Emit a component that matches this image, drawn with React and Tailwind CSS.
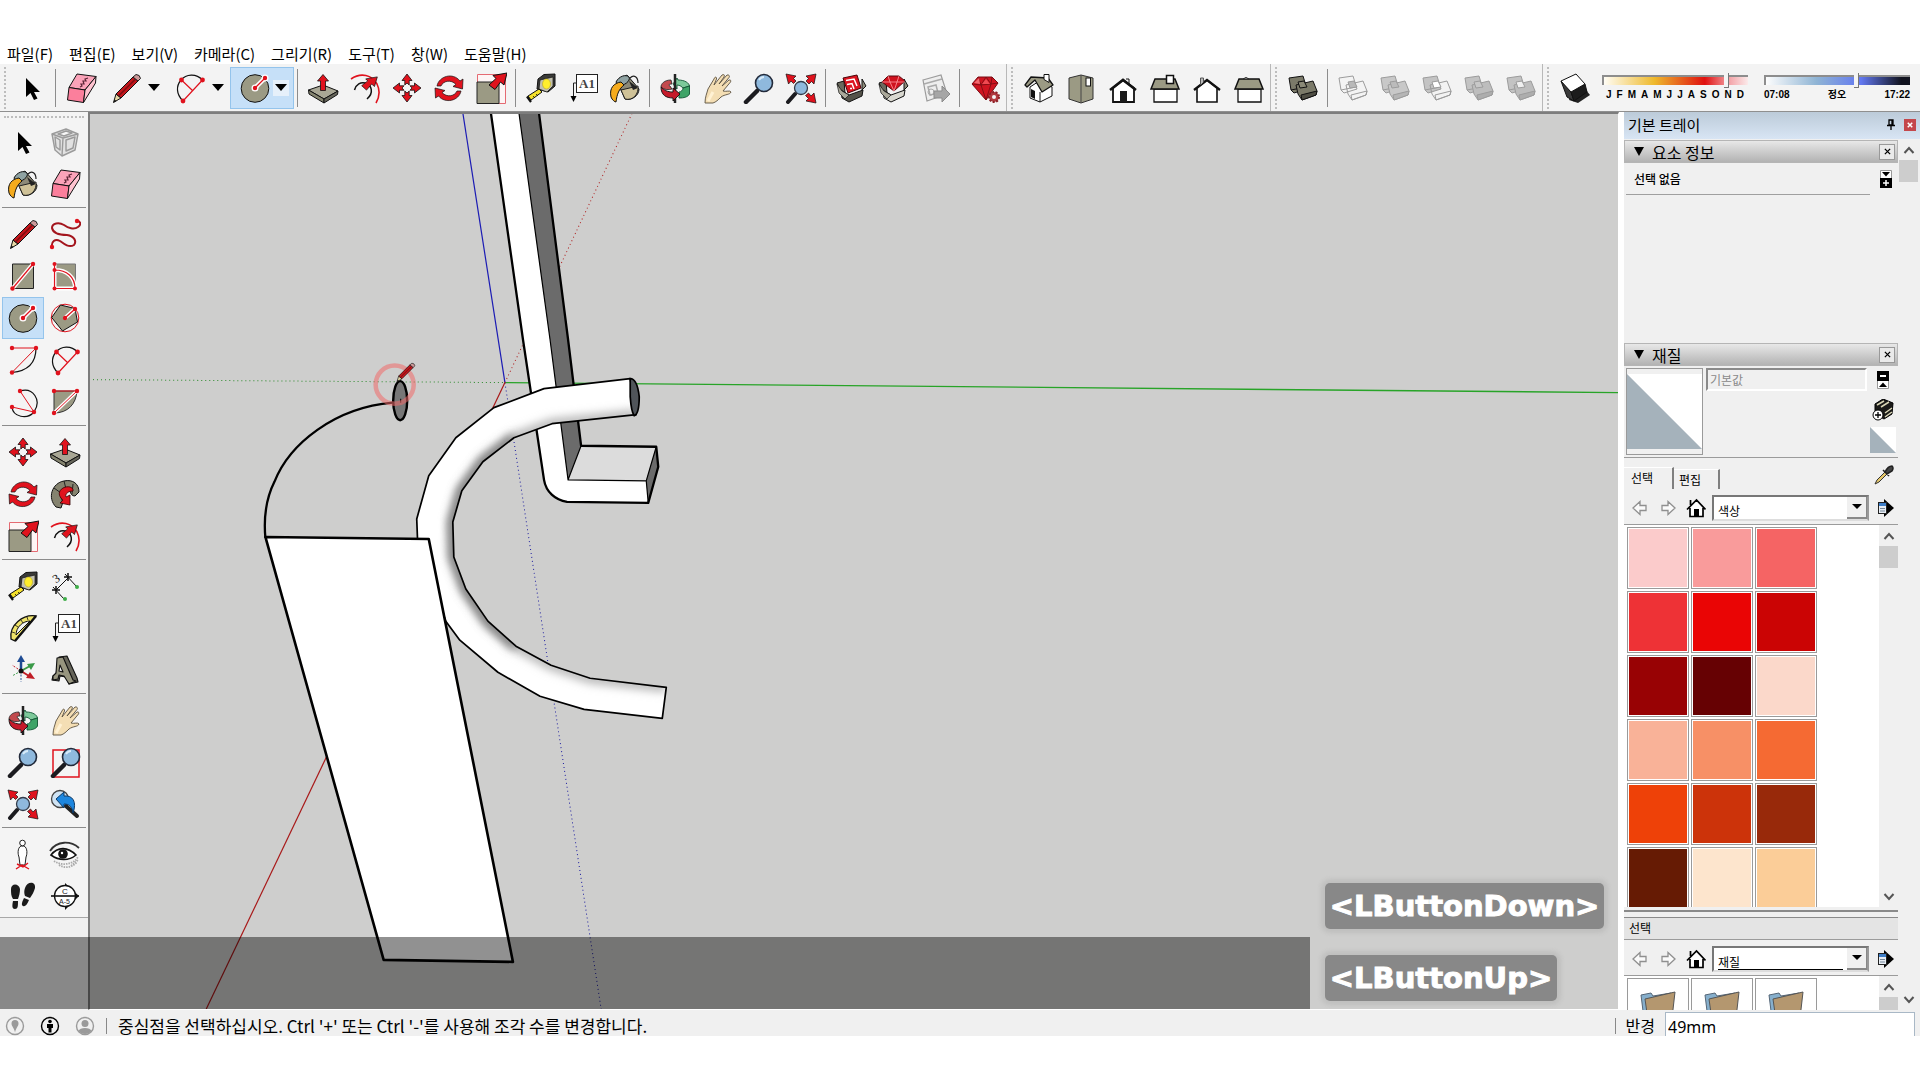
import React from "react";

const RED = "#e0121d";
const OLIVE = "#9b9a84";

function Ico({ children, size = "size-8" }) {
  return (
    <svg viewBox="0 0 32 32" className={size + " shrink-0"} fill="none" aria-hidden="true">
      {children}
    </svg>
  );
}
const Dots = ({ pts, r = 2.2 }) => pts.map(([x, y]) => <circle key={x + "-" + y} cx={x} cy={y} r={r} fill={RED} />);

const CursorIcon = () => (
  <Ico><path d="M11 6V25L15.500 21L19 28L22.500 26.500L19 20H25Z" fill="#000" /></Ico>
);
const EraserIcon = () => (
  <Ico>
    <g stroke="#111" strokeWidth="1" strokeLinejoin="round">
      <path d="M12 2L31 4.500L20 18L4 15.500Z" fill="#fba3b9" />
      <path d="M4 15.500L20 18L18.500 30.500L2.500 28Z" fill="#fb7f9c" />
      <path d="M31 4.500L30.500 11L18.500 30.500L20 18Z" fill="#ffc3d0" />
    </g>
    <path d="M15 15l2-1-1-2 3 0-1-3 3 0-1-2 3-1" stroke="#5b2435" strokeWidth="1.200" />
  </Ico>
);
const PencilShape = () => (
  <>
    <path d="M3.500 30.500L6 22L11 26Z" fill="#e7d9a6" stroke="#111" strokeLinejoin="round" />
    <path d="M3.500 30.500L4.500 27.500L6.500 29Z" fill="#111" />
    <path d="M6 22L23 5L28 9L11 26Z" fill="#c4161c" stroke="#111" />
    <path d="M9 23.500L25 7.500" stroke="#7b0e12" strokeWidth="1.500" />
    <path d="M23 5L26 2.500Q30 2.500 30.500 6.500L28 9Z" fill="#c99" stroke="#222" />
  </>
);
const PencilIcon = () => <Ico><PencilShape /></Ico>;
const ArcIcon = () => (
  <Ico>
    <path d="M9 29C2 22 2 14 7 8C12 2 22 1 28.500 8" stroke="#111" strokeWidth="1.200" />
    <path d="M9 29L28.500 8M7.500 8L19 19" stroke={RED} strokeWidth="1.200" />
    <Dots pts={[[9, 29], [28.5, 8], [7.5, 8]]} r={2.4} />
  </Ico>
);
const CircleIcon = () => (
  <Ico>
    <circle cx="16" cy="16.500" r="13.800" fill={OLIVE} stroke="#111" />
    <path d="M16 16L26 6" stroke="#fff" strokeWidth="4.500" strokeLinecap="round" />
    <circle cx="16" cy="16" r="3.500" fill="#fff" /><circle cx="26" cy="6" r="3.500" fill="#fff" />
    <path d="M16 16L26 6" stroke={RED} strokeWidth="1.200" />
    <Dots pts={[[16, 16], [26, 6]]} />
  </Ico>
);
const PushPullIcon = () => (
  <Ico>
    <path d="M1.500 18L16 13L31 19L17 27Z" fill="#a9a795" stroke="#111" strokeLinejoin="round" />
    <path d="M1.500 18L17 27V31L2 22Z" fill="#85846f" stroke="#111" strokeLinejoin="round" />
    <path d="M17 27L31 19L30.500 22.500L17 31Z" fill="#66655a" stroke="#111" strokeLinejoin="round" />
    <path d="M16 2.500L21.500 9H18.500V18.500H13.500V9H10.500Z" fill={RED} stroke="#111" strokeWidth=".800" />
  </Ico>
);
const NEArrow = () => (
  <path d="M31 3L27.500 15L24 12L17.500 19.500L11.500 14L19 8L16.500 5.500Z" fill={RED} stroke="#111" strokeWidth=".900" strokeLinejoin="round" />
);
const OffsetIcon = () => (
  <Ico>
    <path d="M2 7C12 0 23 3 28 12C31 18 31 24 27 31" stroke={RED} strokeWidth="1.600" />
    <path d="M5.500 18C7 12 12 10 16 11C23 13 25 21 18 27" stroke="#111" strokeWidth="1.500" />
    <g transform="translate(3.500 2.500) scale(.8)"><NEArrow /></g>
  </Ico>
);
const MoveIcon = () => (
  <Ico>
    <g fill={RED} stroke="#111" strokeWidth=".800" strokeLinejoin="round">
      {["rotate(0 16 16)", "rotate(90 16 16)", "rotate(180 16 16)", "rotate(270 16 16)"].map((t) => (
        <path key={t} transform={t} d="M16 2L21 8.500H18.200V13L16 11L13.800 13V8.500H11Z" />
      ))}
    </g>
  </Ico>
);
const RotateIcon = () => (
  <Ico>
    <g fill={RED} stroke="#111" strokeWidth=".700" strokeLinejoin="round">
      <path d="M4 14C6 4 20 0 27 9L30 7L29.500 17L20 14.500L23 12.500C18 7 10 9 8 14Z" />
      <path d="M28 19C26 29 12 32 5.500 24L2.500 26L2 16L12 18.500L9 20.500C14 26 22 24 24 19Z" />
    </g>
  </Ico>
);
const ScaleIcon = () => (
  <Ico>
    <path d="M2.500 2.500H30.500V31.500H2.500Z" stroke="#e56a72" fill="#fdf5f5" />
    <path d="M2 10H24V31.500H2Z" fill={OLIVE} stroke="#222" />
    <path d="M32 1L29 13L25.500 10L20 17.500L14 13L21 6.500L18 3.500Z" fill={RED} stroke="#111" strokeLinejoin="round" />
  </Ico>
);
const TapeIcon = () => (
  <Ico>
    <path d="M13 7L19 2.500L30 2L30 14L23 20L12 17Z" fill="#3a3a38" stroke="#111" />
    <path d="M15 8L28 5L28 14L22 20L14 17Z" fill="#c3c1b0" stroke="#111" strokeWidth=".700" />
    <ellipse cx="21.500" cy="12" rx="4" ry="5" fill="#ffee2c" stroke="#b8a820" strokeWidth=".600" />
    <path d="M14 17L17 20L6 28L3 24Z" fill="#f5e12a" stroke="#111" />
    <path d="M2 24.500L6 30" stroke="#111" strokeWidth="2.200" /><path d="M8 24l2 2M11 22l2 2" stroke="#111" strokeWidth=".800" />
  </Ico>
);
const TextIcon = () => (
  <Ico>
    <rect x="9.500" y="2.500" width="21" height="18" fill="#fff" stroke="#222" />
    <text x="12" y="16" fontSize="13" fontFamily="Liberation Serif" fontWeight="700" fill="#444">A1</text>
    <path d="M9 11H6.500V25" stroke="#222" /><path d="M3.500 24H9.500L6.500 30Z" fill="#000" />
  </Ico>
);
const PaintIcon = () => (
  <Ico>
    <path d="M8 9L18 3L30 17C30 24 22 29 16 27Z" fill="#8d8a78" stroke="#111" strokeLinejoin="round" />
    <path d="M12 18L29 14C30 22 24 29 16 27Z" fill="#cfc298" stroke="#222" />
    <path d="M7 10C10 4 17 2 20 5C22 9 15 14 9 14Z" fill="#8fa3a3" stroke="#111" />
    <path d="M21 6C25 2 29 5 29 11" stroke="#222" strokeWidth="1.200" />
    <path d="M20 9l4 9 5-2z" fill="#222" />
    <path d="M12 10C5 11 0 16 2 25C3 28 6 30 7 30C8 22 10 17 15 13Z" fill="#f5ab1d" stroke="#111" />
  </Ico>
);
const OrbitIcon = () => (
  <Ico>
    <path d="M12 8C5 8 2 12 2 15C5 18 10 18 13 17L11 14C9 13 10 12 13 12Z" fill="#c24a4e" stroke="#222" strokeWidth=".800" />
    <path d="M19 8C26 8 30 11 30.500 14L24 16C23 15 21 13 18 13V17L14 12L18 6Z" fill="#7cc99a" stroke="#153" strokeWidth=".900" />
    <path d="M30.500 14V22C29 25 25 26 20 26V20C22 20 24 18 24 16Z" fill="#3fa468" stroke="#153" strokeWidth=".900" />
    <path d="M16 2V31" stroke="#222" strokeWidth="2.500" />
    <path d="M2 15C2 23 7 26 14 26V29L21 22L14 16V20C8 20 5 18 2 15Z" fill="#c51a2a" stroke="#111" strokeWidth=".900" />
  </Ico>
);
const HandIcon = () => (
  <Ico>
    <path d="M4 31C4 25 6 21 7 17L13 7C14 4 16 5 15.500 7L13 13L21 3C23 2 24 3 23 5L18 12L26 3C28 2.500 29 4 28 5.500L21 14L28 8C30 7.500 30 9 29.500 10L22 19C25 20 29 18 30 20C29 23 24 22 20 25C17 28 15 30 12 31Z" fill="#f4deb4" stroke="#5a5040" strokeWidth=".900" strokeLinejoin="round" />
    <path d="M7 29l5-9" stroke="#fff1d3" strokeWidth="3" />
  </Ico>
);
const Lens = () => (
  <>
    <path d="M3 30L14 19" stroke="#1b1b1f" strokeWidth="4.500" strokeLinecap="round" />
    <circle cx="21" cy="11" r="8.500" fill="#8fb9dd" stroke="#222a3a" strokeWidth="1.600" />
    <path d="M16 8a6 6 0 0 1 5-3" stroke="#d8ebf9" strokeWidth="1.800" />
  </>
);
const ZoomIcon = () => <Ico><Lens /></Ico>;
const ExtentsIcon = () => (
  <Ico>
    <path d="M3 30L10 22" stroke="#1b1b1f" strokeWidth="4" strokeLinecap="round" />
    <circle cx="16" cy="16" r="6.500" fill="#8fb9dd" stroke="#333c4a" strokeWidth="1.300" />
    <g fill={RED} stroke="#111" strokeWidth=".700">
      <path d="M1 2L11 4L8.500 6.500L11 9L8.500 11.500L6 9L3.500 12Z" />
      <path d="M31 2L29 12L26.500 9.500L24 12L21 9L23.500 6.500L21 4Z" />
      <path d="M31 31L21 29L23.500 26.500L20.500 23.500L23.500 21L26 24L29 21Z" />
    </g>
  </Ico>
);
const Box = ({ lid }) => (
  <>
    <path d="M2 11L9 9L10 21L6 20Z" fill="#6b6a5e" stroke="#111" />
    <path d="M6 18L14 23L28 18L27 24L14 30L7 26Z" fill={lid} stroke="#111" />
    <path d="M27 7L31 14L27 18Z" fill="#8e8c7c" stroke="#111" />
    <path d="M2 12L7 19L14 23L10 27L4 21Z" fill="#aaa89a" stroke="#111" strokeWidth=".700" />
  </>
);
const WarehouseIcon = () => (
  <Ico>
    <Box lid="#55534a" />
    <path d="M8 6L22 3L26 16L13 21Z" fill="#dc1420" stroke="#4a0508" />
    <path d="M11 8.500L19 7L22 14M12 12.500L17 11.500L19 17M15 16.500l2 0" stroke="#fff" strokeWidth="1.500" />
  </Ico>
);
const ExtBoxIcon = () => (
  <Ico>
    <Box lid="#d9d8d0" />
    <path d="M5 10L11 4H22L28 9L17 19Z" fill="#d0121e" stroke="#5a0a10" />
    <path d="M5 10H28M11 4L13 10L17 19L20 10L22 4" stroke="#ff9aa0" strokeWidth=".800" />
  </Ico>
);
const SendIcon = () => (
  <Ico>
    <path d="M4 8L22 3L28 22L8 29Z" fill="#eee" stroke="#9b9b9b" strokeWidth="1.200" />
    <path d="M5 12L23 7M9 15l8-2 2 8-8 2z" stroke="#aaa" strokeWidth="1.500" />
    <circle cx="12" cy="20" r="3" stroke="#aaa" />
    <path d="M15 19H23V14L31 22L23 30V26H15Z" fill="#a6a6a6" stroke="#8b8b8b" />
  </Ico>
);
const GemIcon = () => (
  <Ico>
    <path d="M3 12L9 5H23L29 11L17 28Z" fill="#cf1420" stroke="#7a0a12" />
    <path d="M3 12L12 13L17 28M12 13L9 5M12 13L22 12L29 11M22 12L23 5M22 12L17 28M12 13l5-8 5 7" stroke="#7d0d14" strokeWidth=".900" />
    <path d="M5 11l5-5 1 6z" fill="#f26a70" /><path d="M13 12l4-5 4 5z" fill="#ef4a52" />
    <circle cx="25" cy="25" r="5" fill="#b2393f" stroke="#8c2026" strokeDasharray="2 1.500" strokeWidth="2" />
    <circle cx="25" cy="25" r="2" fill="#f3f3f3" />
  </Ico>
);

const IsoIcon = () => (
  <Ico>
    <path d="M7 15L18 8L29 15L29 24L17 30L7 26Z" fill="#fff" stroke="#111" />
    <path d="M2 13L8 5L25 6L30 13L19 20L12 8L4 15Z" fill={OLIVE} stroke="#111" strokeWidth="1.300" strokeLinejoin="round" />
    <path d="M21 2.500h5v8l-5-3z" fill="#fff" stroke="#111" />
    <path d="M17 30V20" stroke="#111" /><path d="M8 17l4 2v8l-4-2z" fill="#111" />
  </Ico>
);
const TopIcon = () => (
  <Ico>
    <path d="M4 6L16 3L28 6V27L16 31L4 27Z" fill={OLIVE} stroke="#333" />
    <path d="M16 3V31" stroke="#444" /><rect x="21" y="6" width="4.500" height="8" fill="#fff" stroke="#111" />
  </Ico>
);
const FrontIcon = () => (
  <Ico>
    <path d="M6 16V30H27V16L16 8Z" fill="#fff" stroke="#111" strokeWidth="1.800" />
    <path d="M3 18L16 8L29 18" stroke="#111" strokeWidth="2.600" /><path d="M19 7h3v5" stroke="#111" /><path d="M13 19h7v11h-7z" fill="#1b1b1b" />
  </Ico>
);
const SideIcon = ({ big }) => (
  <Ico>
    <path d="M5 17H28V30H5Z" fill="#fff" stroke="#111" strokeWidth="1.300" />
    <path d="M6 7H26L30 17H2Z" fill={OLIVE} stroke="#111" strokeWidth="1.500" />
    {big ? <path d="M17.500 3.500h7v8h-7z" fill="#fff" stroke="#111" strokeWidth="1.500" /> : <path d="M10 7q3-3 6 0" fill="#888" stroke="#222" />}
  </Ico>
);
const BackIcon = () => (
  <Ico>
    <path d="M6 16V30H26V16L16 8Z" fill="#fff" stroke="#111" strokeWidth="1.600" />
    <path d="M3 18L16 8L29 18" stroke="#111" strokeWidth="2.300" /><path d="M9.500 13V6h3v4" stroke="#555" fill="#bbb" />
  </Ico>
);
const SolidIcon = ({ a, b, c, line, mid }) => (
  <Ico>
    <g stroke={line} strokeLinejoin="round">
      <path d="M2 6L16 4L20 17L7 21L4 18Z" fill={a} />
      <path d="M4 18L19 15" />
      <path d="M9 13L26 9L30 19L29 23L15 28L11 22Z" fill={b} />
      <path d="M11 10L17 9L20 15L13 16Z" fill={mid} />
      <path d="M14 23L30 19L29 23L15 28Z" fill={c} />
    </g>
  </Ico>
);
const ShadowIcon = () => (
  <Ico>
    <path d="M12 22L27 18L31 23L19 31L10 28Z" fill="#222" />
    <path d="M2 9L8 25L15 29L12 20Z" fill="#3a3a3a" stroke="#111" />
    <path d="M12 20L26 12L28 20L15 29Z" fill="#1c1c1c" stroke="#111" />
    <path d="M2 9L17 2L26 12L12 20Z" fill="#fff" stroke="#111" strokeLinejoin="round" />
  </Ico>
);

const ComponentIcon = () => (
  <Ico>
    <g stroke="#9b9b9b" strokeWidth="1.400" strokeLinejoin="round">
      <path d="M3 8L17 3L29 8L26 24L13 30L6 24Z" fill="#e2e2e2" />
      <path d="M3 8L14 12L29 8M14 12L13 30M6 11l5 3 0 10-4-3zM17 14l9-3-2 11-7 3z" />
      <path d="M9 8l8-3 6 2-8 3z" fill="#f7f7f7" />
    </g>
  </Ico>
);
const FreehandIcon = () => (
  <Ico>
    <path d="M3 29C2 24 6 20 11 23C15 26 20 30 25 27C28 23 25 18 18 17C10 17 4 15 3 10C3 5 10 4 15 7C19 10 25 12 29 9C33 6 31 3 28 3" stroke="#a3151d" strokeWidth="2" />
    <Dots pts={[[3, 29], [28, 3]]} />
  </Ico>
);
const RectIcon = () => (
  <Ico>
    <path d="M5.500 4H26.500V28.500H5.500Z" fill={OLIVE} stroke="#222" />
    <path d="M5.500 28.500L26 4" stroke="#fff" strokeWidth="4" /><path d="M5.500 28.500L26 4" stroke={RED} strokeWidth="1.200" />
    <Dots pts={[[5.5, 28.5], [26, 4]]} />
  </Ico>
);
const RotRectIcon = () => (
  <Ico>
    <path d="M5.500 4H26.500V28.500H5.500Z" fill={OLIVE} stroke="#777" />
    <path d="M5.500 4V28.500H26C26 17 18 10 5.500 10" stroke="#fff" strokeWidth="4" />
    <path d="M5.500 4V28.500H26C26 17 18 10 5.500 10" stroke={RED} strokeWidth="1.200" />
    <Dots pts={[[5.5, 4], [5.5, 10], [5.5, 28.5], [26, 28.5]]} r={2} />
  </Ico>
);
const PolygonIcon = () => (
  <Ico>
    <circle cx="16" cy="16" r="13.800" stroke={RED} />
    <path d="M11.500 3L26 6.500L28.500 20L13.500 29L2.700 15.500Z" fill={OLIVE} stroke="#111" />
    <path d="M16 16L26 7" stroke="#fff" strokeWidth="4" strokeLinecap="round" /><path d="M16 16L26 7" stroke={RED} strokeWidth="1.200" />
    <Dots pts={[[16, 16], [26, 7]]} />
  </Ico>
);
const ArcCenterIcon = () => (
  <Ico>
    <path d="M29 4C29 18 21 27 5 28.500" stroke="#111" strokeWidth="1.200" />
    <path d="M5 4H29L5 28.500" stroke={RED} /><Dots pts={[[5, 4], [29, 4], [5, 28.5]]} />
  </Ico>
);
const Arc3Icon = () => (
  <Ico>
    <path d="M13 5C26 1 35 14 27 26C20 34 6 31 5 21" stroke="#111" strokeWidth="1.200" />
    <path d="M13 5L27 26L5 21" stroke={RED} /><Dots pts={[[13, 5], [27, 26], [5, 21]]} />
  </Ico>
);
const PieIcon = () => (
  <Ico>
    <path d="M5 5H28C27 18 19 27 5 27Z" fill={OLIVE} stroke="#333" />
    <path d="M5 27L28 5" stroke="#fff" strokeWidth="3.500" /><path d="M5 5H28L5 27" stroke={RED} />
    <Dots pts={[[5, 5], [28, 5], [5, 27]]} />
  </Ico>
);
const FollowIcon = () => (
  <Ico>
    <path d="M7 29C-2 20 3 5 15 3C24 1 30 6 30 14L26 18C20 18 22 10 18 11C12 12 10 18 14 24L12 30Z" fill="#85836f" stroke="#111" />
    <path d="M15 3L17 11M5 10l7 5M24 6l-1 10" stroke="#222" />
    <path d="M14 10C20 7 25 10 24 13C18 13 16 17 17 19L21 17V27L11 25L14 22C9 18 9 13 14 10Z" fill={RED} stroke="#300" strokeWidth=".800" />
  </Ico>
);
const DimIcon = () => (
  <Ico>
    <path d="M7 20L19 8M4 17L15 29M16 4L28 17" stroke="#111" />
    <path d="M3 20h8M7 16v8M15 7h8M19 3v8" stroke="#111" strokeWidth="1.500" />
    <text x="4" y="12" fontSize="12" fontFamily="Liberation Serif" fill="#111" transform="rotate(-35 8 8)">3</text>
    <circle cx="16" cy="29" r="2" fill="#3fae49" /><circle cx="28" cy="17" r="2" fill="#3fae49" />
  </Ico>
);
const ProtractorIcon = () => (
  <Ico>
    <path d="M29 4C16 2 2 13 4 27L8 29Z" fill="#efe36a" stroke="#111" strokeWidth="1.300" />
    <path d="M23 9C16 9 9 15 9 23Z" fill="#f3f3f3" stroke="#111" />
    <path d="M29 4L8 29" stroke="#111" strokeWidth="2.300" /><path d="M5 20l3 1M8 13l3 2M14 8l2 3M20 5l1 3" stroke="#111" strokeWidth=".800" />
  </Ico>
);
const AxesIcon = () => (
  <Ico>
    <path d="M14 17V5" stroke="#1d4a93" strokeWidth="2.500" /><path d="M14 1L18 8H10Z" fill="#1d4a93" />
    <path d="M14 17L23 12" stroke="#3a9a48" strokeWidth="2" /><path d="M28 9L24 16L20 10Z" fill="#3a9a48" />
    <path d="M14 17L22 22" stroke="#c01c25" strokeWidth="2" /><path d="M28 25L19 24L23 18Z" fill="#c01c25" />
    <path d="M14 17L5 11" stroke="#c01c25" strokeDasharray="2 1.500" /><path d="M14 17L5 22" stroke="#3a9a48" strokeDasharray="2 1.500" /><path d="M14 17V28" stroke="#1d4a93" strokeDasharray="2 1.500" />
    <circle cx="14" cy="17" r="2.500" fill="#111" />
  </Ico>
);
const Text3DIcon = () => (
  <Ico>
    <g stroke="#111" strokeWidth="1.100" strokeLinejoin="round">
      <path d="M10 3L18 2L28 24L29 28L20 30L17 23L11 22L10 27L3 26L4 22L7 20Z" fill="#66655a" />
      <path d="M8 4L14 3L24 26L27 27L20 30L15 22L10 21L9 25L4 26L4 22L7 19Z" fill="#97957f" />
      <path d="M11 11L14 18L10 17Z" fill="#f3f3f3" />
    </g>
  </Ico>
);
const ZoomWinIcon = () => <Ico><path d="M4 4H30V31H4Z" stroke={RED} strokeWidth="1.500" /><g transform="translate(1 0)"><Lens /></g></Ico>;
const PrevIcon = () => (
  <Ico>
    <circle cx="11" cy="11" r="8.500" fill="#cfe3f3" stroke="#444" strokeWidth="1.300" />
    <path d="M17 18L28 28" stroke="#222" strokeWidth="4" strokeLinecap="round" />
    <path d="M7 11L15 4V8C24 7 28 14 24 25C23 19 21 16 15 16V20Z" fill="#1d86de" stroke="#0b3866" strokeLinejoin="round" />
  </Ico>
);
const PositionIcon = () => (
  <Ico>
    <path d="M14 8C10 10 11 17 12 19L13 27H18L19 19C20 17 21 10 17 8Z" fill="#fff" stroke="#222" />
    <circle cx="15.500" cy="5" r="2.800" fill="#fff" stroke="#222" />
    <path d="M9 31L15 27L22 31M10 26L16 29L21 25" stroke={RED} strokeWidth="1.400" />
  </Ico>
);
const EyeIcon = () => (
  <Ico>
    <path d="M1 13C8 2 22 3 30 10" stroke="#333" strokeWidth="1.800" />
    <path d="M2 17C9 8 19 9 27 17C20 23 10 23 2 17Z" fill="#fff" stroke="#111" strokeWidth="1.600" />
    <circle cx="14" cy="16" r="4.800" fill="#111" /><circle cx="13" cy="15" r="1.200" fill="#fff" />
    <path d="M5 23C12 28 24 27 29 19M10 27C16 31 24 29 28 24M22 28l7-6" stroke="#aaa" strokeWidth="1.800" strokeDasharray="1.500 1" />
  </Ico>
);
const WalkIcon = () => (
  <Ico>
    <path d="M4 9C4 3 12 3 13 9C13 13 12 16 11 19L6 19C4 16 4 13 4 9ZM6 21L11 21C11 26 11 29 8 29C5 29 5 26 6 21Z" fill="#1b1b1b" />
    <path d="M18 8C20 1 29 1 28 8C27 12 25 15 23 18L18 16C17 13 17 11 18 8ZM17 18L22 20C20 25 18 27 16 26C14 25 15 22 17 18Z" fill="#1b1b1b" />
  </Ico>
);
const SectionIcon = () => (
  <Ico>
    <path d="M16 3L30 16L16 30Z" fill="#111" />
    <circle cx="16" cy="16" r="10.500" fill="#fff" stroke="#111" strokeWidth="1.300" />
    <path d="M2 16H30" stroke="#111" strokeWidth="1.600" />
    <text x="13" y="14" fontSize="8" fontFamily="Liberation Sans" fill="#222">C</text>
    <text x="10" y="24" fontSize="7" fontFamily="Liberation Sans" fill="#222">A-5</text>
  </Ico>
);

function Tool({ icon: Icon, name, active }) {
  return (
    <button aria-label={name} className={"flex h-[42px] w-[42px] items-center justify-center " + (active ? "bg-[#c6e0f8] border border-[#94c4ec]" : "")}>
      <Icon />
    </button>
  );
}
function DropTool({ icon: Icon, name, active }) {
  return (
    <div className={"flex h-[42px] w-16 items-center justify-between pl-2 pr-1 " + (active ? "bg-[#c6e0f8] border border-[#94c4ec]" : "")}>
      <button aria-label={name}><Icon /></button>
      <button aria-label={name + " 옵션"} className={"flex h-4 w-4 items-center justify-center " + (active ? "bg-[#e6f0fa]" : "")}>
        <svg viewBox="0 0 12 7" className="h-[7px] w-3"><path d="M0 0H12L6 7Z" /></svg>
      </button>
    </div>
  );
}
const VSep = () => <div className="mx-[3px] h-[38px] w-0.5 shrink-0 border-l border-[#8c8c8c]" />;
const Grip = ({ edge }) => (
  <div className={"flex h-[47px] shrink-0 items-center pl-1 " + (edge ? "w-3 border-l border-[#b8b8b8]" : "w-2.5")}>
    <div className="h-[42px] border-l-2 border-dotted border-[#bdbdbd]" />
  </div>
);

const off = { line: "#9c9c9c" };
const Solids = {
  shell: () => <SolidIcon a="#7b7a69" b="#7b7a69" c="#4f4e44" mid="#8a8977" line="#111" />,
  intersect: () => <SolidIcon a="none" b="none" c="none" mid="#b9b9b9" {...off} />,
  union: () => <SolidIcon a="#c8c8c8" b="#c8c8c8" c="#b5b5b5" mid="#bbb" {...off} />,
  subtract: () => <SolidIcon a="#c3c3c3" b="none" c="none" mid="#fff" {...off} />,
  trim: () => <SolidIcon a="#c3c3c3" b="#bdbdbd" c="#adadad" mid="#c8c8c8" {...off} />,
  split: () => <SolidIcon a="#c3c3c3" b="#bdbdbd" c="#adadad" mid="#f0f0f0" {...off} />,
};

const track =
  "block appearance-none cursor-pointer outline-none h-2.5 w-full border-t-2 border-l-2 border-[#8d8d8d] [&::-webkit-slider-thumb]:appearance-none [&::-webkit-slider-thumb]:h-[15px] [&::-webkit-slider-thumb]:w-[5px] [&::-webkit-slider-thumb]:bg-[#f4f4f4] [&::-webkit-slider-thumb]:border-r [&::-webkit-slider-thumb]:border-b [&::-webkit-slider-thumb]:border-[#777]";

function Toolbar() {
  return (
    <div className="flex h-12 shrink-0 items-center border-b border-[#8f8f8f] bg-[#f3f3f3]">
      <Grip />
      <Tool icon={CursorIcon} name="선택" />
      <VSep />
      <Tool icon={EraserIcon} name="지우개" />
      <DropTool icon={PencilIcon} name="선" />
      <DropTool icon={ArcIcon} name="호" />
      <DropTool icon={CircleIcon} name="원" active />
      <VSep />
      <Tool icon={PushPullIcon} name="밀기/끌기" />
      <Tool icon={OffsetIcon} name="오프셋" />
      <Tool icon={MoveIcon} name="이동" />
      <Tool icon={RotateIcon} name="회전" />
      <Tool icon={ScaleIcon} name="배율" />
      <VSep />
      <Tool icon={TapeIcon} name="줄자" />
      <Tool icon={TextIcon} name="텍스트" />
      <Tool icon={PaintIcon} name="페인트통" />
      <VSep />
      <Tool icon={OrbitIcon} name="궤도" />
      <Tool icon={HandIcon} name="이동 보기" />
      <Tool icon={ZoomIcon} name="확대/축소" />
      <Tool icon={ExtentsIcon} name="범위 확대" />
      <VSep />
      <Tool icon={WarehouseIcon} name="3D Warehouse" />
      <Tool icon={ExtBoxIcon} name="Extension Warehouse" />
      <Tool icon={SendIcon} name="LayOut으로 보내기" />
      <VSep />
      <Tool icon={GemIcon} name="확장 프로그램 관리자" />
      <Grip edge />
      <Tool icon={IsoIcon} name="등각" />
      <Tool icon={TopIcon} name="평면" />
      <Tool icon={FrontIcon} name="정면" />
      <Tool icon={() => <SideIcon big />} name="우측면" />
      <Tool icon={BackIcon} name="후면" />
      <Tool icon={() => <SideIcon />} name="좌측면" />
      <Grip edge />
      <Tool icon={Solids.shell} name="외부 셸" />
      <VSep />
      <Tool icon={Solids.intersect} name="교차" />
      <Tool icon={Solids.union} name="결합" />
      <Tool icon={Solids.subtract} name="빼기" />
      <Tool icon={Solids.trim} name="자르기" />
      <Tool icon={Solids.split} name="분할" />
      <Grip edge />
      <Tool icon={ShadowIcon} name="그림자" />
      <div className="flex flex-1 gap-4 pl-1.5 pr-2.5 font-['Liberation_Sans','Noto_Sans_CJK_KR',sans-serif] text-[10px] font-bold leading-3 text-black">
        <div className="min-w-0 flex-1">
          <input type="range" aria-label="날짜" defaultValue={86} className={track + " bg-[linear-gradient(90deg,#fffdf5,#eeb92c_35%,#e01010_70%,#f4a9ad_88%,#fbeaea)]"} />
          <div className="mt-1 flex justify-between px-1">
            {"JFMAMJJASOND".split("").map((m, i) => <span key={i}>{m}</span>)}
          </div>
        </div>
        <div className="min-w-0 flex-1">
          <input type="range" aria-label="시간" defaultValue={63} className={track + " bg-[linear-gradient(90deg,#fdfdfd,#8fb4d4_35%,#6278f0_66%,#11131f_94%)]"} />
          <div className="mt-1 flex justify-between">
            <span>07:08</span><span>정오</span><span>17:22</span>
          </div>
        </div>
      </div>
    </div>
  );
}

const palette = [
  [[CursorIcon, "선택"], [ComponentIcon, "구성요소"], [PaintIcon, "페인트통"], [EraserIcon, "지우개"]],
  [[PencilIcon, "선"], [FreehandIcon, "자유형"], [RectIcon, "사각형"], [RotRectIcon, "회전된 사각형"], [CircleIcon, "원"], [PolygonIcon, "다각형"], [ArcCenterIcon, "호"], [ArcIcon, "2점 호"], [Arc3Icon, "3점 호"], [PieIcon, "파이"]],
  [[MoveIcon, "이동"], [PushPullIcon, "밀기/끌기"], [RotateIcon, "회전"], [FollowIcon, "따라가기"], [ScaleIcon, "배율"], [OffsetIcon, "오프셋"]],
  [[TapeIcon, "줄자"], [DimIcon, "치수"], [ProtractorIcon, "각도기"], [TextIcon, "텍스트"], [AxesIcon, "축"], [Text3DIcon, "3D 텍스트"]],
  [[OrbitIcon, "궤도"], [HandIcon, "이동 보기"], [ZoomIcon, "확대/축소"], [ZoomWinIcon, "창 확대"], [ExtentsIcon, "범위 확대"], [PrevIcon, "이전"]],
  [[PositionIcon, "카메라 배치"], [EyeIcon, "둘러보기"], [WalkIcon, "걷기"], [SectionIcon, "단면"]],
];

function LeftPalette() {
  return (
    <aside className="w-[88px] shrink-0 bg-[#f0f0f0]">
      <div className="border-b border-[#a8a8a8] bg-[#f4f4f4] px-0.5 pt-1">
        <div className="mx-0.5 mb-[3px] border-t-2 border-dotted border-[#bdbdbd]" />
        {palette.map((group, i) => (
          <div key={i} className={i ? "mt-0.5 border-t border-[#8c8c8c] pt-[5px]" : ""}>
            <div className="grid grid-cols-[42px_42px]">
              {group.map(([I, n]) => <Tool key={n} icon={I} name={n} active={n === "원"} />)}
            </div>
          </div>
        ))}
      </div>
    </aside>
  );
}

const TUBE = "M630 379L544 389L494 408L456 438L429 476L417 519L418 545L446 621L460 640L498 672L540 696L584 709L662 718L666 687L590 678L551 665L516 646L488 621L466 589L454 557L453 522L462 491L483 462L514 438L552 424L636 415Z";
const INNER = "M666 687L590 678L551 665L516 646L488 621L466 589L454 557L453 522L462 491L483 462L514 438L552 424L636 415";

function Scene() {
  return (
    <svg viewBox="91 115 1527 893" preserveAspectRatio="xMinYMin slice" className="block h-full w-full" fill="none" role="img" aria-label="3D 모델">
      <defs>
        <clipPath id="tube"><path d={TUBE} /></clipPath>
        <filter id="soft" x="-20%" y="-20%" width="140%" height="140%"><feGaussianBlur stdDeviation="5" /></filter>
      </defs>
      <path d="M90 380L505 383" stroke="#2b8a2b" strokeDasharray="1 3" />
      <path d="M505 383L1618 393" stroke="#28a428" strokeWidth="1.300" />
      <path d="M463 114L505 383" stroke="#1c1cb4" strokeWidth="1.200" />
      <path d="M505 383L601 1008" stroke="#1c1ca0" strokeDasharray="1 3" />
      <path d="M505 383L632 114" stroke="#b02020" strokeDasharray="1 3" />
      <path d="M505 383L207 1008" stroke="#a81818" strokeWidth="1.200" />
      <path d="M491 114H519L550 340L568 480L646 481L648 503L567 502C555 500 546 492 544 480L523 340Z" fill="#fff" />
      <path d="M519 114H539L568 340L581 446L568 480L550 340Z" fill="#6b6b6b" />
      <path d="M581 446L656 447L646 481L568 480Z" fill="#dcdcdc" />
      <path d="M656 447L658 467L648 503L646 481Z" fill="#6b6b6b" />
      <g stroke="#000" strokeLinejoin="round">
        <path d="M519 114L550 340L568 480L581 446M568 480L646 481L656 447M646 481L648 503" strokeWidth="1.200" />
        <path d="M491 114L523 340L544 480C546 492 555 500 567 502L648 503L658 467L656 447L581 446L568 340L539 114" strokeWidth="2.300" />
      </g>
      <path d={TUBE} fill="#fff" />
      <g clipPath="url(#tube)">
        <path d={INNER} stroke="#b4b4b4" strokeWidth="10" filter="url(#soft)" />
        <path d="M514 438L483 462L462 491L453 522L454 557L466 589L488 621L516 646" stroke="#777" strokeWidth="9" filter="url(#soft)" />
      </g>
      <path d={TUBE} stroke="#000" strokeWidth="1.700" strokeLinejoin="round" />
      <path d="M630 379Q637 379 639 397Q639 414 634 416Q631 412 630 397Z" fill="#50555a" stroke="#000" strokeWidth="1.700" />
      <path d="M266 537L429 539L513 961L384 959Z" fill="#fff" stroke="#000" strokeWidth="2.600" strokeLinejoin="round" />
      <path d="M266 538C264 516 268 496 275 482C290 444 335 408 393 403" stroke="#000" strokeWidth="2.300" />
      <ellipse cx="400.500" cy="401" rx="7" ry="19.500" fill="#777" stroke="#000" strokeWidth="2.400" />
      <path d="M401 399V403" stroke="#000" />
      <circle cx="395" cy="385" r="19" stroke="#f06a6a" strokeOpacity=".550" strokeWidth="4.500" />
      <g transform="translate(395 362) scale(.66)"><PencilShape /></g>
    </svg>
  );
}

function Key({ children }) {
  return (
    <div className="flex h-[46px] items-center rounded-[5px] bg-[#888] px-[5px] shadow-[0_0_4px_4px_rgba(136,136,136,0.2)]">
      <span className="font-['DejaVu_Sans',sans-serif] text-[29px] font-bold leading-none text-white [-webkit-text-stroke:1px_white]">{children}</span>
    </div>
  );
}

const Chevron = ({ down }) => (
  <svg viewBox="0 0 12 8" className={"h-2 w-3 " + (down ? "rotate-180" : "")} fill="none"><path d="M1.500 7L6 2L10.500 7" stroke="#555" strokeWidth="2" /></svg>
);
function ScrollBar() {
  return (
    <div className="flex w-[19px] shrink-0 flex-col items-center bg-[#f0f0f0]">
      <button aria-label="위로" className="flex h-[21px] shrink-0 items-center"><Chevron /></button>
      <div className="h-[22px] w-full bg-[#cdcdcd]" />
      <div className="flex-1" />
      <button aria-label="아래로" className="flex h-[21px] shrink-0 items-center"><Chevron down /></button>
    </div>
  );
}
function PanelHeader({ children }) {
  return (
    <div className="flex h-[23px] shrink-0 items-center border border-[#b5b5b5] bg-linear-to-b from-[#e8e8e8] to-[#b3b3b3] pl-[9px] pr-0.5">
      <button className="flex items-center gap-2 text-[16px] leading-none">
        <svg viewBox="0 0 10 9" className="h-[9px] w-2.5"><path d="M0 0H10L5 9Z" /></svg>
        {children}
      </button>
      <button aria-label="닫기" className="ml-auto flex size-4 items-center justify-center border border-[#999] bg-[#eaeaea]">
        <svg viewBox="0 0 8 8" className="size-[7px]"><path d="M1 1L7 7M7 1L1 7" stroke="#000" strokeWidth="1.500" /></svg>
      </button>
    </div>
  );
}
function NavRow({ value, underline, label }) {
  return (
    <div className="flex h-[36px] shrink-0 items-center border-b border-[#9b9b9b] pl-2 pt-0.5">
      <button aria-label="뒤로" className="mr-3"><svg viewBox="0 0 16 16" className="size-4" fill="#fafafa"><path d="M1 8L8 1.500V5.500H14V10.500H8V14.500Z" stroke="#8f8f8f" strokeWidth="1.300" /></svg></button>
      <button aria-label="앞으로" className="mr-2.5"><svg viewBox="0 0 16 16" className="size-4" fill="#fafafa"><path d="M15 8L8 1.500V5.500H2V10.500H8V14.500Z" stroke="#8f8f8f" strokeWidth="1.300" /></svg></button>
      <button aria-label="홈" className="mr-1.5">
        <svg viewBox="0 0 20 20" className="size-5" fill="none"><path d="M4 10V18.500H17V10L10.500 3.500Z" fill="#fff" /><path d="M1 11.500L10.500 2L19.500 11.500M4 10V18.500H17V10M4.500 7V2" stroke="#000" strokeWidth="1.700" /><path d="M8 11h5v7.500H8z" fill="#000" /></svg>
      </button>
      <div className="relative h-[26px] w-[157px] border-2 border-[#777] border-b-[#ddd] border-r-[#999] bg-white">
        <select aria-label={label} className="h-full w-full appearance-none px-1 text-[12px] leading-none outline-none">
          <option>{value}</option>
        </select>
        {underline && <div className="absolute bottom-0 left-1 right-6 border-b border-black" />}
        <div className="pointer-events-none absolute inset-y-0 right-0 flex w-5 items-center justify-center border-b-2 border-r border-[#888] bg-[#f0f0f0]">
          <svg viewBox="0 0 10 5" className="h-[5px] w-2.5"><path d="M0 0H10L5 5Z" /></svg>
        </div>
      </div>
      <button aria-label="세부 정보" className="ml-2">
        <svg viewBox="0 0 18 18" className="size-[18px]"><path d="M7 0L17 9L7 18Z" /><rect x="1.500" y="3.500" width="8" height="11" fill="#e8eef5" stroke="#222" /><path d="M2 4h7v3H2z" fill="#3f7fc9" /><path d="M3 9.500h5M3 12h5" stroke="#789" /></svg>
      </button>
    </div>
  );
}
const swatches = [
  "#fbcbcb", "#f99b9b", "#f56464", "#ee3236", "#ea0505", "#cb0404", "#980204", "#660103", "#fbd8ca",
  "#f9b298", "#f79066", "#f56a33", "#ee4108", "#cc330a", "#98290a", "#661b04", "#fde5cd", "#fbcd98",
];

const Folder = () => (
  <svg viewBox="0 0 36 36" className="size-9" fill="none">
    <path d="M1 4L11 2L13 5L31 2L10 36H5Z" fill="#86afcc" stroke="#567" />
    <path d="M5 8L35 1L31 36H9Z" fill="#b4976f" stroke="#555" />
  </svg>
);

function Tray() {
  return (
    <aside className="flex w-[296px] shrink-0 flex-col overflow-hidden bg-[#f0f0f0] text-black">
      <div className="flex h-[27px] shrink-0 items-center bg-linear-to-b from-[#bccbd9] to-[#d8e5f4] px-1 pb-0.5">
        <h2 className="text-[15px] leading-none">기본 트레이</h2>
        <button aria-label="고정" className="ml-auto mr-2"><svg viewBox="0 0 10 11" className="h-[11px] w-2.5" fill="none"><path d="M3 1H7V6H3ZM6 1V6M1 6.500H9M5 7V11" stroke="#000" strokeWidth="1.300" /></svg></button>
        <button aria-label="닫기" className="flex size-3 items-center justify-center bg-[#c4474b]"><svg viewBox="0 0 8 8" className="size-1.5"><path d="M1 1L7 7M7 1L1 7" stroke="#fff" strokeWidth="2" /></svg></button>
      </div>
      <div className="flex min-h-0 flex-1">
        <div className="mt-px flex min-w-0 flex-1 flex-col">
          <PanelHeader>요소 정보</PanelHeader>
          <section className="h-[180px] shrink-0 pl-2.5 pr-1.5">
            <div className="flex h-7 items-center justify-between pt-1">
              <p className="text-[12px] font-medium leading-none">선택 없음</p>
              <button aria-label="세부 정보 표시"><svg viewBox="0 0 12 18" className="h-[18px] w-3"><path d="M.500.500h11v17H.500Z" fill="#fff" stroke="#999" /><path d="M2 2H10L6 6.500Z" /><path d="M0 8h12v10H0z" /><path d="M6 10v6M3 13h6" stroke="#fff" strokeWidth="1.500" /></svg></button>
            </div>
            <div className="-ml-2 mr-[22px] mt-[3px] border-t border-[#9f9f9f]" />
          </section>
          <PanelHeader>재질</PanelHeader>
          <div className="flex h-[92px] shrink-0 border-b border-[#9b9b9b] pl-0.5 pr-0.5 pt-0.5">
            <div className="h-[87px] w-[77px] border border-[#9a9a9a] py-[5px]">
              <svg viewBox="0 0 75 75" className="block h-full w-full" preserveAspectRatio="none"><path d="M0 0H75V75Z" fill="#fff" /><path d="M0 0V75H75Z" fill="#a5b2bb" /></svg>
            </div>
            <input aria-label="재질 이름" defaultValue="기본값" className="ml-[3px] h-[23px] w-[161px] border-2 border-[#8a8a8a] border-b-[#fff] border-r-[#fff] bg-[#f0f0f0] px-0.5 text-[12px] leading-none text-[#8a8a8a] outline-none" />
            <div className="ml-auto flex w-[26px] flex-col items-center">
              <button aria-label="보조 창"><svg viewBox="0 0 12 18" className="mt-[3px] h-[18px] w-3"><path d="M.500.500h11v17H.500Z" fill="#fff" stroke="#999" /><path d="M2 16H10L6 11.500Z" /><path d="M0 0h12v10H0z" /><path d="M3 5h6" stroke="#fff" strokeWidth="2" /></svg></button>
              <button aria-label="재질 만들기" className="mt-2.5">
                <svg viewBox="0 0 22 22" className="size-[22px]" fill="none"><path d="M3 5L11 0L21 4L20 15L12 20L3 15Z" fill="#1a1a18" stroke="#000" /><path d="M5 6L12 2M9 8L17 3M13 14L20 9M13 18L20 13" stroke="#d9d5b5" strokeWidth="1.500" /><circle cx="6" cy="16" r="5" fill="#fff" stroke="#000" /><path d="M6 13v6M3 16h6" stroke="#000" strokeWidth="1.300" /></svg>
              </button>
              <svg viewBox="0 0 26 26" className="mt-auto mb-1 size-[26px]"><path d="M0 0H26V26Z" fill="#fff" /><path d="M0 0V26H26Z" fill="#a5b2bb" /></svg>
            </div>
          </div>
          <div className="flex h-[31px] shrink-0 items-end text-[12px] leading-none">
            <button className="flex h-[22px] w-[50px] items-center border-r-2 border-t border-[#7f7f7f] border-t-white pb-0.5 pl-[7px]">선택</button>
            <button className="flex h-5 w-[46px] items-center border-r-2 border-t border-[#7f7f7f] border-t-white pl-[5px]">편집</button>
            <button aria-label="샘플 페인트" className="ml-auto mr-1 mb-1">
              <svg viewBox="0 0 20 20" className="size-5" fill="none"><path d="M1 19L3 15L11 7L13 9L5 17Z" fill="#e5c76a" stroke="#333" /><path d="M9 5L15 11M11 7Q14 1 18 1Q20 3 18 6L13 9Z" fill="#444" stroke="#222" strokeWidth="1.500" /></svg>
            </button>
          </div>
          <NavRow value="색상" label="재질 모음" />
          <div className="flex min-h-0 flex-1 overflow-hidden bg-white">
            <div className="grid flex-1 auto-rows-[62px] grid-cols-[62px_62px_62px] gap-0.5 pl-[3px] pt-0.5">
              {swatches.map((c) => (
                <button key={c} aria-label={c} className="border border-[#9a9a9a] p-px"><span className="block h-full w-full" style={{ background: c }} /></button>
              ))}
            </div>
            <ScrollBar />
          </div>
          <div className="mt-[3px] h-2 shrink-0 border-b border-t-2 border-[#8a8a8a]" />
          <div className="flex h-[22px] shrink-0 items-center border-b border-[#9b9b9b] bg-[#e4e4e4] pb-0.5 pl-[5px] text-[12px] leading-none">선택</div>
          <NavRow value="재질" label="보조 재질 모음" underline />
          <div className="flex h-[34px] shrink-0 overflow-hidden bg-white">
            <div className="grid flex-1 grid-cols-[62px_62px_62px] gap-0.5 pl-[3px] pt-0.5">
              {[0, 1, 2].map((i) => <button key={i} aria-label="폴더" className="flex h-[62px] items-start justify-center border border-[#9a9a9a] pt-3"><Folder /></button>)}
            </div>
            <div className="flex w-[19px] flex-col items-center bg-[#f0f0f0]">
              <button aria-label="위로" className="flex h-[21px] shrink-0 items-center"><Chevron /></button>
              <div className="w-full flex-1 bg-[#cdcdcd]" />
            </div>
          </div>
        </div>
        <div className="ml-px mr-0.5 flex"><ScrollBar /></div>
      </div>
    </aside>
  );
}

const StatusIcon = ({ color, children }) => (
  <svg viewBox="0 0 20 20" className="size-5" fill="none"><circle cx="10" cy="10" r="8.500" stroke={color} strokeWidth="1.400" /><g fill={color}>{children}</g></svg>
);

export default function App() {
  return (
    <div className="flex h-screen flex-col overflow-hidden bg-white font-['Noto_Sans_CJK_KR',sans-serif] text-black">
      <nav className="mt-10 flex h-6 shrink-0 items-center gap-4 pl-[7px] pt-0.5 text-[15px] leading-none">
        {["파일(F)", "편집(E)", "보기(V)", "카메라(C)", "그리기(R)", "도구(T)", "창(W)", "도움말(H)"].map((m) => <button key={m}>{m}</button>)}
      </nav>
      <Toolbar />
      <main className="relative flex min-h-0 flex-1">
        <LeftPalette />
        <div className="relative mr-[5px] min-w-0 flex-1 border-l-2 border-t-2 border-r border-b border-[#7d7d7d] border-r-white border-b-white bg-[#cececd]">
          <Scene />
        </div>
        <Tray />
        <div className="absolute bottom-px left-0 h-[72px] w-[68.25%] bg-black/43" />
        <div className="absolute bottom-[9px] left-[69%] flex flex-col items-start gap-[26px]">
          <Key>&lt;LButtonDown&gt;</Key>
          <Key>&lt;LButtonUp&gt;</Key>
        </div>
      </main>
      <footer className="mb-11 flex h-[26px] shrink-0 items-center bg-[#f0f0f0] pl-[5px] text-[16px] leading-none">
        <div className="flex gap-[15px] pt-1.5">
          <button aria-label="위치"><StatusIcon color="#9a9a9a"><path d="M10 4a3.500 3.500 0 0 1 3.500 3.500c0 3-2.500 4-3.500 9c-1-5-3.500-6-3.500-9A3.500 3.500 0 0 1 10 4Z" /></StatusIcon></button>
          <button aria-label="크레딧"><StatusIcon color="#000"><circle cx="10" cy="5.500" r="1.800" /><path d="M7 8h6v4h-1.500v4.500h-3V12H7z" /></StatusIcon></button>
          <button aria-label="로그인"><StatusIcon color="#9a9a9a"><circle cx="10" cy="7.500" r="3.500" /><path d="M3.500 15c1-4 12-4 13 0c-3 4-10 4-13 0Z" /></StatusIcon></button>
        </div>
        <div className="mx-[11px] mt-1.5 h-4 border-l border-[#888]" />
        <p className="whitespace-nowrap pt-1 text-[17px]">중심점을 선택하십시오. Ctrl '+' 또는 Ctrl '-'를 사용해 조각 수를 변경합니다.</p>
        <div className="ml-auto mr-2.5 mt-1.5 h-4 border-l border-[#888]" />
        <label htmlFor="radius" className="mr-2.5 whitespace-nowrap pt-1">반경</label>
        <input id="radius" defaultValue="49mm" className="mr-[5px] h-6 w-[250px] shrink-0 self-end border border-b-0 border-[#a9b8c6] bg-white px-0.5 pt-1 font-['Noto_Sans',sans-serif] text-[16px] leading-none outline-none" />
      </footer>
    </div>
  );
}
